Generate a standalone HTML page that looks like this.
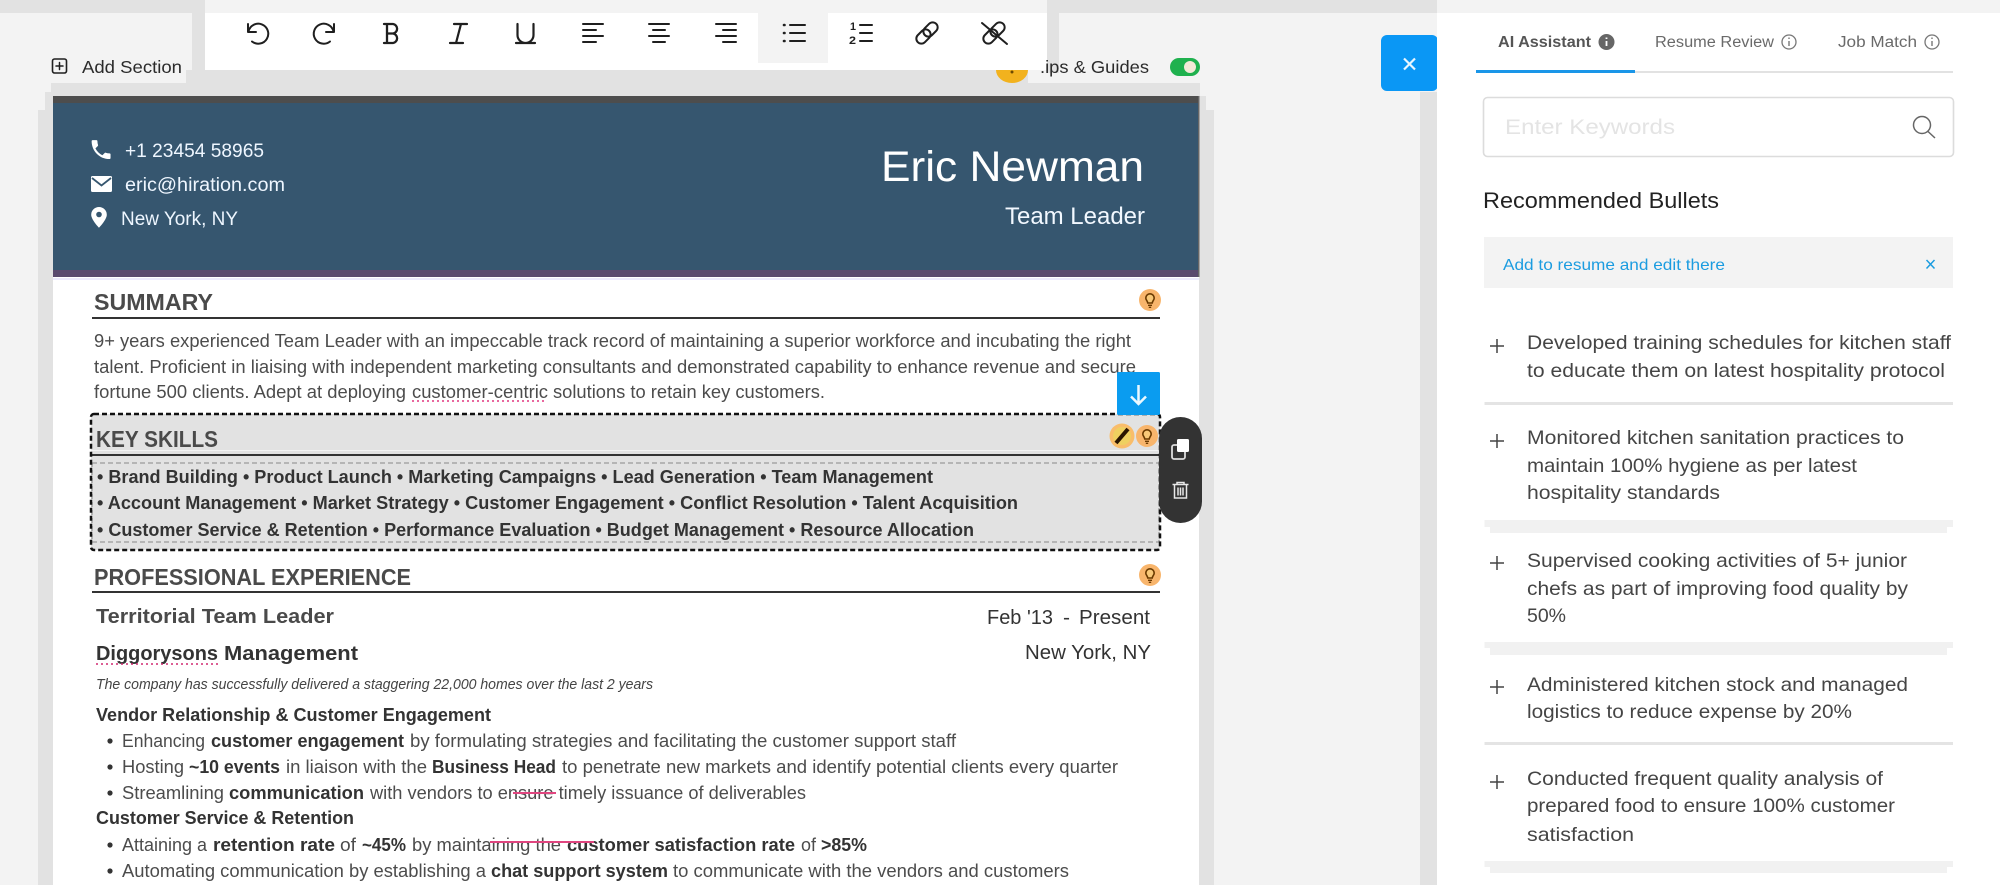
<!DOCTYPE html>
<html lang="en">
<head>
<meta charset="utf-8">
<title>Resume Builder</title>
<style>
html,body{margin:0;padding:0;width:2000px;height:885px;overflow:hidden;background:#f3f3f3}
svg{display:block}
text{font-family:"Liberation Sans",Arial,sans-serif}
.b{font-size:18px;fill:#4c4c4c}
.bb{font-size:18px;font-weight:700;fill:#333}
.h{font-size:23px;font-weight:700;fill:#4a4a4a}
.sk{font-size:18px;font-weight:700;fill:#333}
.it{font-size:15px;font-style:italic;fill:#444}
.w{fill:#eef6ff;font-size:19px}
.it2{font-size:19.5px;fill:#454545}
.tab{font-size:15.5px;fill:#6a6a6a}
.ic{fill:none;stroke:#1f1f1f;stroke-width:2;stroke-linecap:round;stroke-linejoin:round}
</style>
</head>
<body>
<svg xmlns="http://www.w3.org/2000/svg" width="2000" height="885" viewBox="0 0 2000 885">
<defs>
<g id="lamp">
<circle r="11" fill="#f8b56c"/>
<path d="M-4.200-2a4.200 4.200 0 1 1 8.400 0c0 2-1.700 2.900-2 5h-4.400c-.3-2.100-2-3-2-5z" fill="#f8c878" stroke="#6b3a00" stroke-width="1.600"/>
<path d="M-2 5.300h4M-1.200 7.300h2.400" stroke="#6b3a00" stroke-width="1.400"/>
</g>
</defs>

<!-- backgrounds -->
<rect width="2000" height="885" fill="#f3f3f3"/>
<rect x="0" y="0" width="205" height="13" fill="#e2e2e2"/>
<rect x="1047" y="0" width="390" height="13" fill="#e2e2e2"/>
<rect x="192" y="13" width="13" height="70" fill="#e2e2e2"/>
<rect x="1047" y="13" width="12" height="60" fill="#e2e2e2"/>
<rect x="51" y="83" width="1149" height="14" fill="#e2e2e2"/>
<rect x="186" y="70" width="842" height="14" fill="#e2e2e2"/>
<rect x="45" y="92" width="10" height="18" fill="#e2e2e2"/>
<rect x="38" y="110" width="16" height="775" fill="#e2e2e2"/>
<rect x="1199" y="96" width="7" height="16" fill="#e2e2e2"/>
<rect x="1199" y="110" width="15" height="775" fill="#e2e2e2"/>
<rect x="1420" y="92" width="17" height="793" fill="#e2e2e2"/>

<!-- toolbar -->
<rect x="205" y="13" width="842" height="57" fill="#fff"/>
<rect x="758" y="6" width="70" height="57" fill="#f3f3f3"/>
<g class="ic">
<path d="M248 24v8h8M248.500 31.500A10 10 0 1 1 252 41.500"/>
<path d="M334 24v8h-8M333.500 31.500A10 10 0 1 0 330 41.500"/>
<path d="M384 24h3v19h-3M387 24h6a4.800 4.800 0 0 1 0 9.500h-6M393 33.500a4.800 4.800 0 0 1 0 9.500h-9" stroke-width="2.300"/>
<path d="M454 24h13M450 43h13M461 24l-5 19" stroke-width="2.200"/>
<path d="M517.500 24v11a8 8 0 0 0 16 0V24M516 43h19" stroke-width="2.200"/>
<path d="M583 24h20M583 30h13M583 36h20M583 42h13"/>
<path d="M649 24h20M653 30h12M649 36h20M653 42h12"/>
<path d="M716 24h20M723 30h13M716 36h20M723 42h13"/>
<path d="M790 25h15M790 33h15M790 41h15"/>
<path d="M784 25h.5M784 33h.5M784 41h.5" stroke-width="2.600"/>
<path d="M860 25h12M860 33h12M860 41h12"/>
<g transform="rotate(-45 927 33)"><rect x="914" y="28" width="16" height="10" rx="5"/><rect x="924" y="28" width="16" height="10" rx="5"/></g>
<g transform="rotate(-45 994 33)"><rect x="981" y="28" width="16" height="10" rx="5"/><rect x="991" y="28" width="16" height="10" rx="5"/></g>
<path d="M982 23l25 21"/>
<rect x="52.500" y="59" width="14" height="14" rx="2" stroke-width="1.600"/>
<path d="M59.500 62.500v7M56 66h7" stroke-width="1.500"/>
</g>
<text x="850" y="30" font-size="11" font-weight="700" fill="#1f1f1f" textLength="6" lengthAdjust="spacingAndGlyphs">1</text>
<text x="849" y="44" font-size="11" font-weight="700" fill="#1f1f1f" textLength="7" lengthAdjust="spacingAndGlyphs">2</text>

<!-- top row labels -->
<text x="82" y="73" font-size="17.500" fill="#2b2b2b" textLength="100" lengthAdjust="spacingAndGlyphs">Add Section</text>
<path d="M996 70h32a16 13 0 0 1-32 0z" fill="#f2b21e"/>
<circle cx="1012" cy="72" r="1.500" fill="#6d4a00"/>
<text x="1040" y="73" font-size="17.500" fill="#2b2b2b" textLength="109" lengthAdjust="spacingAndGlyphs">.ips &amp; Guides</text>
<rect x="1170" y="58" width="30" height="18" rx="9" fill="#1fb14e"/>
<circle cx="1190" cy="67" r="6" fill="#f3e9d8"/>

<!-- resume paper -->
<rect x="53" y="277" width="1146" height="608" fill="#fff"/>
<rect x="53" y="96" width="1146" height="7" fill="#4d4d4d"/>
<rect x="53" y="103" width="1146" height="167" fill="#36566f"/>
<rect x="53" y="270" width="1146" height="7" fill="#5a4a6e"/>
<rect x="53" y="278" width="1146" height="2" fill="#eceafc"/>
<rect x="1198" y="96" width="1.500" height="181" fill="#666"/>

<!-- header content -->
<path transform="translate(88.500 137) scale(1.050)" fill="#fff" d="M6.600 10.800c1.400 2.800 3.800 5.100 6.600 6.600l2.200-2.200c.3-.3.700-.4 1-.2 1.100.4 2.300.6 3.600.6.600 0 1 .4 1 1V20c0 .6-.4 1-1 1C10.600 21 3 13.400 3 4c0-.6.400-1 1-1h3.500c.6 0 1 .4 1 1 0 1.300.2 2.500.6 3.600.1.300 0 .7-.2 1z"/>
<text class="w" x="125" y="157" textLength="139" lengthAdjust="spacingAndGlyphs">+1 23454 58965</text>
<rect x="91" y="176" width="21" height="16" rx="1.500" fill="#fff"/>
<path d="M92 178l9.500 7.500L111 178" fill="none" stroke="#36566f" stroke-width="1.800"/>
<text class="w" x="125" y="191" textLength="160" lengthAdjust="spacingAndGlyphs">eric@hiration.com</text>
<path d="M99 207a7.800 7.800 0 0 0-7.800 7.800c0 5 7.800 13 7.800 13s7.800-8 7.800-13A7.800 7.800 0 0 0 99 207z" fill="#fff"/>
<circle cx="99" cy="214.500" r="2.800" fill="#36566f"/>
<text class="w" x="121" y="225" textLength="117" lengthAdjust="spacingAndGlyphs">New York, NY</text>
<text x="881" y="181" font-size="43" fill="#fff" textLength="263" lengthAdjust="spacingAndGlyphs">Eric Newman</text>
<text x="1005" y="224" font-size="24" fill="#f2f8ff" textLength="140" lengthAdjust="spacingAndGlyphs">Team Leader</text>

<!-- summary -->
<text class="h" x="94" y="310" textLength="119" lengthAdjust="spacingAndGlyphs">SUMMARY</text>
<rect x="92" y="317" width="1068" height="2" fill="#333"/>
<use href="#lamp" x="1150" y="300"/>
<text class="b" x="94" y="347" textLength="1037" lengthAdjust="spacingAndGlyphs">9+ years experienced Team Leader with an impeccable track record of maintaining a superior workforce and incubating the right</text>
<text class="b" x="94" y="373" textLength="1042" lengthAdjust="spacingAndGlyphs">talent. Proficient in liaising with independent marketing consultants and demonstrated capability to enhance revenue and secure</text>
<text class="b" x="94" y="398" textLength="312" lengthAdjust="spacingAndGlyphs">fortune 500 clients. Adept at deploying</text>
<text class="b" x="412" y="398" textLength="136" lengthAdjust="spacingAndGlyphs">customer-centric</text>
<text class="b" x="553" y="398" textLength="272" lengthAdjust="spacingAndGlyphs">solutions to retain key customers.</text>
<path d="M412 401h134" stroke="#e0357f" stroke-width="1.500" stroke-dasharray="2 3"/>

<!-- key skills selection -->
<rect x="91" y="414" width="1069" height="136" fill="#e2e2e2"/>
<rect x="91" y="450" width="1069" height="1" fill="#f4f4f4"/>
<rect x="92" y="454" width="1068" height="2" fill="#333"/>
<rect x="92" y="463" width="1067" height="79" fill="none" stroke="#9a9a9a" stroke-width="1.300" stroke-dasharray="5 3"/>
<rect x="91" y="414" width="1069" height="136" rx="3" fill="none" stroke="#111" stroke-width="2.500" stroke-dasharray="5 3"/>
<text class="h" x="96" y="447" textLength="122" lengthAdjust="spacingAndGlyphs">KEY SKILLS</text>
<text class="sk" x="97" y="483" textLength="836" lengthAdjust="spacingAndGlyphs">• Brand Building • Product Launch • Marketing Campaigns • Lead Generation • Team Management</text>
<text class="sk" x="97" y="509" textLength="921" lengthAdjust="spacingAndGlyphs">• Account Management • Market Strategy • Customer Engagement • Conflict Resolution • Talent Acquisition</text>
<text class="sk" x="97" y="536" textLength="877" lengthAdjust="spacingAndGlyphs">• Customer Service &amp; Retention • Performance Evaluation • Budget Management • Resource Allocation</text>

<rect x="1117" y="372" width="43" height="43" rx="1.500" fill="#0a9cf0"/>
<path d="M1138.500 385v19M1131 396.500l7.500 7.500 7.500-7.500" fill="none" stroke="#eaf8ff" stroke-width="2.500"/>
<circle cx="1122" cy="436" r="12.500" fill="#f9bd6a"/>
<circle cx="1122" cy="436" r="9" fill="#efd060"/>
<path d="M1116 443l12-14" stroke="#2a1500" stroke-width="4"/>
<use href="#lamp" x="1147" y="436"/>
<rect x="1159" y="417" width="43" height="106" rx="21.500" fill="#333"/>
<rect x="1172" y="445" width="13" height="14" rx="2" fill="none" stroke="#ddd" stroke-width="1.800"/>
<rect x="1177" y="439" width="12" height="13" rx="1.500" fill="#fff"/>
<path d="M1172.500 484.500h16M1177 484.500v-2h7v2M1174.500 484.500v13.500h12v-13.500M1178 487.500v8M1180.500 487.500v8M1183 487.500v8" fill="none" stroke="#e8e8e8" stroke-width="1.500"/>

<!-- experience -->
<text class="h" x="94" y="585" textLength="317" lengthAdjust="spacingAndGlyphs">PROFESSIONAL EXPERIENCE</text>
<rect x="92" y="591" width="1068" height="2" fill="#333"/>
<use href="#lamp" x="1150" y="575"/>
<text x="96" y="623" font-size="20.500" font-weight="700" fill="#4a4a4a" textLength="238" lengthAdjust="spacingAndGlyphs">Territorial Team Leader</text>
<text x="987" y="624" font-size="20.500" fill="#333" textLength="66" lengthAdjust="spacingAndGlyphs">Feb '13</text>
<text x="1063" y="624" font-size="20.500" fill="#333" textLength="7" lengthAdjust="spacingAndGlyphs">-</text>
<text x="1079" y="624" font-size="20.500" fill="#333" textLength="71" lengthAdjust="spacingAndGlyphs">Present</text>
<text x="96" y="660" font-size="20.500" font-weight="700" fill="#333" textLength="122" lengthAdjust="spacingAndGlyphs">Diggorysons</text>
<text x="224" y="660" font-size="20.500" font-weight="700" fill="#333" textLength="134" lengthAdjust="spacingAndGlyphs">Management</text>
<path d="M96 664h122" stroke="#d02a70" stroke-width="1.500" stroke-dasharray="2 3"/>
<text x="1025" y="659" font-size="20.500" fill="#333" textLength="126" lengthAdjust="spacingAndGlyphs">New York, NY</text>
<text class="it" x="96" y="689" textLength="557" lengthAdjust="spacingAndGlyphs">The company has successfully delivered a staggering 22,000 homes over the last 2 years</text>
<text class="bb" x="96" y="721" textLength="395" lengthAdjust="spacingAndGlyphs">Vendor Relationship &amp; Customer Engagement</text>

<circle cx="110" cy="741" r="2.600" fill="#333"/>
<text class="b" x="122" y="747" textLength="83" lengthAdjust="spacingAndGlyphs">Enhancing</text>
<text class="bb" x="211" y="747" textLength="193" lengthAdjust="spacingAndGlyphs">customer engagement</text>
<text class="b" x="410" y="747" textLength="546" lengthAdjust="spacingAndGlyphs">by formulating strategies and facilitating the customer support staff</text>

<circle cx="110" cy="767" r="2.600" fill="#333"/>
<text class="b" x="122" y="773" textLength="62" lengthAdjust="spacingAndGlyphs">Hosting</text>
<text class="bb" x="189" y="773" textLength="91" lengthAdjust="spacingAndGlyphs">~10 events</text>
<text class="b" x="286" y="773" textLength="141" lengthAdjust="spacingAndGlyphs">in liaison with the</text>
<text class="bb" x="432" y="773" textLength="124" lengthAdjust="spacingAndGlyphs">Business Head</text>
<text class="b" x="562" y="773" textLength="556" lengthAdjust="spacingAndGlyphs">to penetrate new markets and identify potential clients every quarter</text>

<circle cx="110" cy="793" r="2.600" fill="#333"/>
<text class="b" x="122" y="799" textLength="102" lengthAdjust="spacingAndGlyphs">Streamlining</text>
<text class="bb" x="229" y="799" textLength="135" lengthAdjust="spacingAndGlyphs">communication</text>
<text class="b" x="370" y="799" textLength="436" lengthAdjust="spacingAndGlyphs">with vendors to ensure timely issuance of deliverables</text>
<rect x="513" y="792" width="43" height="2" fill="#e0457f"/>

<text class="bb" x="96" y="824" textLength="258" lengthAdjust="spacingAndGlyphs">Customer Service &amp; Retention</text>

<circle cx="110" cy="845" r="2.600" fill="#333"/>
<text class="b" x="122" y="851" textLength="85" lengthAdjust="spacingAndGlyphs">Attaining a</text>
<text class="bb" x="213" y="851" textLength="122" lengthAdjust="spacingAndGlyphs">retention rate</text>
<text class="b" x="340" y="851" textLength="16" lengthAdjust="spacingAndGlyphs">of</text>
<text class="bb" x="362" y="851" textLength="44" lengthAdjust="spacingAndGlyphs">~45%</text>
<text class="b" x="412" y="851" textLength="149" lengthAdjust="spacingAndGlyphs">by maintaining the</text>
<text class="bb" x="567" y="851" textLength="228" lengthAdjust="spacingAndGlyphs">customer satisfaction rate</text>
<text class="b" x="801" y="851" textLength="15" lengthAdjust="spacingAndGlyphs">of</text>
<text class="bb" x="821" y="851" textLength="46" lengthAdjust="spacingAndGlyphs">&gt;85%</text>
<rect x="490" y="841" width="104" height="2" fill="#e0457f"/>

<circle cx="110" cy="871" r="2.600" fill="#333"/>
<text class="b" x="122" y="877" textLength="364" lengthAdjust="spacingAndGlyphs">Automating communication by establishing a</text>
<text class="bb" x="491" y="877" textLength="177" lengthAdjust="spacingAndGlyphs">chat support system</text>
<text class="b" x="673" y="877" textLength="396" lengthAdjust="spacingAndGlyphs">to communicate with the vendors and customers</text>

<!-- right panel -->
<rect x="1381" y="35" width="57" height="56" rx="6" fill="#0a97f5"/>
<path d="M1404 58.500l11 11M1415 58.500l-11 11" stroke="#e8f6ff" stroke-width="2.200"/>
<rect x="1437" y="13" width="563" height="872" fill="#fff"/>

<text class="tab" x="1498" y="47" font-weight="700" style="fill:#555" textLength="93" lengthAdjust="spacingAndGlyphs">AI Assistant</text>
<circle cx="1606.500" cy="42" r="8" fill="#666"/>
<path d="M1606.500 41v5M1606.500 37.500v1.500" stroke="#fff" stroke-width="1.800"/>
<text class="tab" x="1655" y="47" textLength="119" lengthAdjust="spacingAndGlyphs">Resume Review</text>
<circle cx="1789" cy="42" r="7" fill="none" stroke="#777" stroke-width="1.300"/>
<path d="M1789 41v5M1789 37.500v1.500" stroke="#777" stroke-width="1.400"/>
<text class="tab" x="1838" y="47" textLength="79" lengthAdjust="spacingAndGlyphs">Job Match</text>
<circle cx="1932" cy="42" r="7" fill="none" stroke="#777" stroke-width="1.300"/>
<path d="M1932 41v5M1932 37.500v1.500" stroke="#777" stroke-width="1.400"/>
<rect x="1476" y="71" width="477" height="2" fill="#e2e2e2"/>
<rect x="1476" y="70" width="159" height="3" fill="#1a96e8"/>

<rect x="1483.500" y="97.500" width="470" height="59" rx="4" fill="#fff" stroke="#dcdcdc" stroke-width="1.600"/>
<text x="1505" y="134" font-size="21" fill="#e4e4e4" textLength="170" lengthAdjust="spacingAndGlyphs">Enter Keywords</text>
<circle cx="1922" cy="125" r="8.500" fill="none" stroke="#666" stroke-width="1.500"/>
<path d="M1928 131.500l7 6.500" stroke="#666" stroke-width="1.500"/>

<text x="1483" y="208" font-size="22" fill="#222" textLength="236" lengthAdjust="spacingAndGlyphs">Recommended Bullets</text>

<rect x="1484" y="237" width="469" height="51" fill="#f3f3f3"/>
<text x="1503" y="270" font-size="16" fill="#1b9ce0" textLength="222" lengthAdjust="spacingAndGlyphs">Add to resume and edit there</text>
<path d="M1926.500 260l8 8.500M1934.500 260l-8 8.500" stroke="#1b9ce0" stroke-width="1.500"/>

<!-- bullets -->
<path d="M1497 339v14M1490 346h14M1497 434v14M1490 441h14M1497 556v14M1490 563h14M1497 680v14M1490 687h14M1497 775v14M1490 782h14" stroke="#444" stroke-width="1.500"/>

<text class="it2" x="1527" y="349" textLength="424" lengthAdjust="spacingAndGlyphs">Developed training schedules for kitchen staff</text>
<text class="it2" x="1527" y="377" textLength="418" lengthAdjust="spacingAndGlyphs">to educate them on latest hospitality protocol</text>
<rect x="1484.500" y="402" width="468.500" height="3" fill="#e4e4e4"/>

<text class="it2" x="1527" y="444" textLength="377" lengthAdjust="spacingAndGlyphs">Monitored kitchen sanitation practices to</text>
<text class="it2" x="1527" y="472" textLength="330" lengthAdjust="spacingAndGlyphs">maintain 100% hygiene as per latest</text>
<text class="it2" x="1527" y="499" textLength="193" lengthAdjust="spacingAndGlyphs">hospitality standards</text>
<rect x="1484.500" y="520" width="468.500" height="7" fill="#f1f1f1"/>
<rect x="1490" y="527" width="457" height="6" fill="#f1f1f1"/>

<text class="it2" x="1527" y="567" textLength="380" lengthAdjust="spacingAndGlyphs">Supervised cooking activities of 5+ junior</text>
<text class="it2" x="1527" y="595" textLength="381" lengthAdjust="spacingAndGlyphs">chefs as part of improving food quality by</text>
<text class="it2" x="1527" y="622" textLength="39" lengthAdjust="spacingAndGlyphs">50%</text>
<rect x="1484.500" y="642" width="468.500" height="6" fill="#f1f1f1"/>
<rect x="1490" y="648" width="457" height="7" fill="#f1f1f1"/>

<text class="it2" x="1527" y="691" textLength="381" lengthAdjust="spacingAndGlyphs">Administered kitchen stock and managed</text>
<text class="it2" x="1527" y="718" textLength="325" lengthAdjust="spacingAndGlyphs">logistics to reduce expense by 20%</text>
<rect x="1484.500" y="742" width="468.500" height="3" fill="#e4e4e4"/>

<text class="it2" x="1527" y="785" textLength="356" lengthAdjust="spacingAndGlyphs">Conducted frequent quality analysis of</text>
<text class="it2" x="1527" y="812" textLength="368" lengthAdjust="spacingAndGlyphs">prepared food to ensure 100% customer</text>
<text class="it2" x="1527" y="841" textLength="107" lengthAdjust="spacingAndGlyphs">satisfaction</text>
<rect x="1484.500" y="861" width="468.500" height="6" fill="#f1f1f1"/>
<rect x="1490" y="867" width="457" height="6" fill="#f1f1f1"/>
</svg>
</body>
</html>
